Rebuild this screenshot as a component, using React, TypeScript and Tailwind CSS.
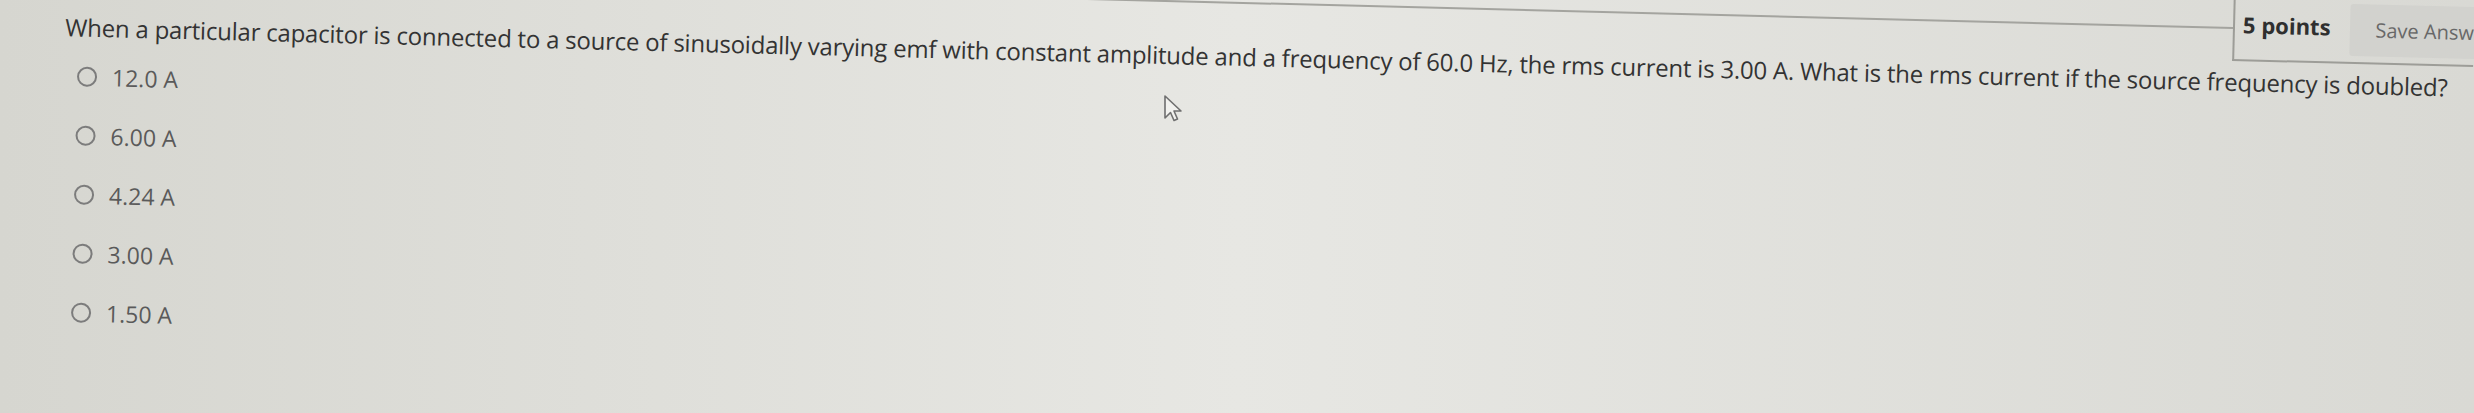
import React from "react";

const options = ["12.0 A", "6.00 A", "4.24 A", "3.00 A", "1.50 A"];

export default function App() {
  return (
    <div className="relative w-[2474px] h-[413px] overflow-hidden bg-linear-to-r from-[#d6d6d0] via-[#e7e7e3] to-[#d9d9d4] font-['Open_Sans',sans-serif]">
      <div className="w-[2474px] origin-[2233px_27px] rotate-[1.45deg]">
        <div className="flex items-start">
          <div className="flex-1 h-[29px] border-b-2 border-[#a4a49f]" />
          <div className="w-[241px] shrink-0 h-[61px] border-l-2 border-b-2 border-[#9d9d98] flex items-start">
            <div className="shrink-0 pl-[8px] pt-[9px] text-[22px] leading-[30px] font-bold text-[#2f2f2f] whitespace-nowrap">
              5 points
            </div>
            <div className="shrink-0 ml-[19px] mt-[1px] h-[52px] pl-[26px] pr-[26px] rounded-[3px] bg-[#d2d2ce] flex items-center text-[20px] leading-[28px] text-[#686868] whitespace-nowrap">
              Save Answer
            </div>
          </div>
        </div>
        <p className="pl-[66px] mt-[5px] text-[24px] leading-[32px] tracking-[-0.22px] text-[#333333] whitespace-nowrap">
          When a particular capacitor is connected to a source of sinusoidally varying emf with constant amplitude and a frequency of 60.0 Hz, the rms current is 3.00 A. What is the rms current if the source frequency is doubled?
        </p>
        <div className="pl-[79px] mt-[18px] flex flex-col gap-[29px]">
          {options.map((o) => (
            <label key={o} className="flex items-center h-[30px]">
              <span className="w-[20px] h-[20px] rounded-full border-2 border-[#7c7c7c] shrink-0" />
              <span className="ml-[15px] text-[23px] leading-[30px] text-[#5a5a5a] whitespace-nowrap">{o}</span>
            </label>
          ))}
        </div>
      </div>
      <svg
        className="absolute left-[1163px] top-[94px]"
        width="20"
        height="30"
        viewBox="0 0 20 30"
      >
        <path
          d="M2 2 L2 24 L7.5 18.5 L11 26.5 L14.5 25 L11 17 L18 17 Z"
          fill="#f1f1ee"
          stroke="#6f6f6f"
          strokeWidth="1.6"
          strokeLinejoin="round"
        />
      </svg>
    </div>
  );
}
